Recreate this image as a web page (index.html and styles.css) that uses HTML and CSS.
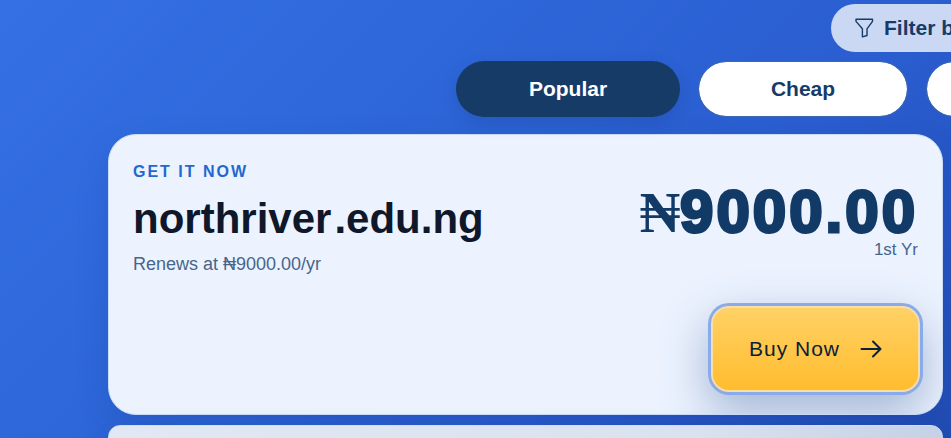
FILE: index.html
```html
<!DOCTYPE html>
<html lang="en">
<head>
  <meta charset="UTF-8" />
  <meta name="viewport" content="width=device-width, initial-scale=1.0" />
  <title>Domain Search</title>
  <link rel="stylesheet" href="styles.css">
</head>
<body>
  <main class="page">
    <div class="toolbar">
      <button type="button" class="filter-btn">
        <svg class="filter-icon" viewBox="0 0 20 20" fill="none" stroke="currentColor" stroke-width="1.4" stroke-linejoin="round" aria-hidden="true">
          <path d="M1 1.2h16.5v2.2L12 10.8v6.7l-4.6 1.3v-8L1 3.4z" />
        </svg>
        Filter by
      </button>
    </div>

    <div class="tabs">
      <button type="button" class="tab active">Popular</button>
      <button type="button" class="tab">Cheap</button>
      <button type="button" class="tab">New</button>
    </div>

    <section class="card">
      <div class="domain">
        <p class="eyebrow">GET IT NOW</p>
        <h2 class="domain-name"><span>northriver</span><span class="tld">.edu.ng</span></h2>
        <p class="renewal">Renews at ₦9000.00/yr</p>
      </div>
      <div class="purchase">
        <div class="price-box">
          <p class="price"><span class="currency">₦</span>9000.00</p>
          <p class="term">1st Yr</p>
        </div>
        <button type="button" class="buy-btn">
          Buy Now
          <svg class="arrow" viewBox="0 0 22 18" fill="none" stroke="currentColor" stroke-width="2" stroke-linecap="round" stroke-linejoin="round" aria-hidden="true">
            <path d="M1.5 9h19M13 1.5L20.5 9L13 16.5" />
          </svg>
        </button>
      </div>
    </section>

    <section class="card next-card"></section>
  </main>
</body>
</html>
```

FILE: styles.css
```css
* {
  box-sizing: border-box;
  margin: 0;
  padding: 0;
}

body {
  font-family: "Liberation Sans", Arial, sans-serif;
  background: linear-gradient(135deg, #3570e5 0%, #2e68da 30%, #2a5dd0 65%, #214bb2 100%);
  min-height: 100vh;
  overflow: hidden;
}

.page {
  padding: 4px 8px 0 108px;
}

.toolbar,
.tabs {
  display: flex;
  justify-content: flex-end;
  margin-right: -48px;
}

.filter-btn {
  display: flex;
  align-items: center;
  gap: 9px;
  height: 48px;
  width: 160px;
  padding: 0 24px;
  border: none;
  border-radius: 24px;
  background: #cbd8f3;
  color: #173b67;
  font: bold 21px "Liberation Sans", Arial, sans-serif;
  white-space: nowrap;
  cursor: pointer;
}

.filter-icon {
  width: 20px;
  height: 20px;
  flex-shrink: 0;
}

.tabs {
  align-items: center;
  gap: 18px;
  margin-top: 9px;
  margin-right: -143px;
}

.tab {
  height: 56px;
  width: 210px;
  flex-shrink: 0;
  border: 1px solid #3d68ae;
  border-radius: 28px;
  background: #fff;
  background-clip: padding-box;
  color: #173b67;
  font: bold 21px "Liberation Sans", Arial, sans-serif;
  cursor: pointer;
}

.tab.active {
  width: 224px;
  border: none;
  background: #173b67;
  color: #fff;
  box-shadow: 0 6px 16px rgba(20, 50, 110, 0.2);
}

.tab:last-child {
  width: 160px;
}

.card {
  display: flex;
  justify-content: space-between;
  margin-top: 17px;
  padding: 24px;
  border: 1px solid #cadcf8;
  border-radius: 28px;
  background: #ecf3ff;
  box-shadow: 0 12px 32px rgba(20, 50, 120, 0.16);
  overflow: hidden;
}

.eyebrow {
  margin-top: 3px;
  color: #2268cf;
  font-size: 16px;
  font-weight: bold;
  line-height: 20px;
  letter-spacing: 2px;
}

.domain-name {
  display: flex;
  gap: 3px;
  margin-top: 12px;
  color: #0f172a;
  font-size: 42px;
  line-height: 50px;
}

.renewal {
  margin-top: 10px;
  color: #47658c;
  font-size: 18px;
  line-height: 20px;
}

.purchase {
  display: flex;
  flex-direction: column;
  align-items: flex-end;
  gap: 48px;
  padding-top: 24px;
}

.price-box {
  text-align: right;
}

.price {
  color: #123a67;
  font-size: 60px;
  font-weight: bold;
  line-height: 57px;
  letter-spacing: 3px;
  -webkit-text-stroke: 3px #123a67;
}

.currency {
  font-family: "Liberation Serif", serif;
  font-size: 56px;
  line-height: 1px;
  letter-spacing: 0;
  -webkit-text-stroke: 0;
}

.term {
  color: #47658c;
  font-size: 17px;
  line-height: 20px;
}

.buy-btn {
  display: flex;
  align-items: center;
  gap: 20px;
  height: 82px;
  padding: 0 36px;
  border: none;
  border-radius: 16px;
  background: linear-gradient(#ffd166, #ffbd2e);
  box-shadow:
    0 0 0 2px #fadea3,
    0 0 0 5px #8aabea,
    0 18px 46px 6px rgba(30, 65, 130, 0.34);
  color: #0b2038;
  font: 21px "Liberation Sans", Arial, sans-serif;
  letter-spacing: 1px;
  cursor: pointer;
}

.arrow {
  width: 22px;
  height: 18px;
}

.next-card {
  height: 80px;
  margin-top: 10px;
  border-color: #cfddf5;
  border-radius: 12px;
  background: linear-gradient(90deg, #e1e8f3, #d9e2f0 70%, #c5d1e6);
}
```
